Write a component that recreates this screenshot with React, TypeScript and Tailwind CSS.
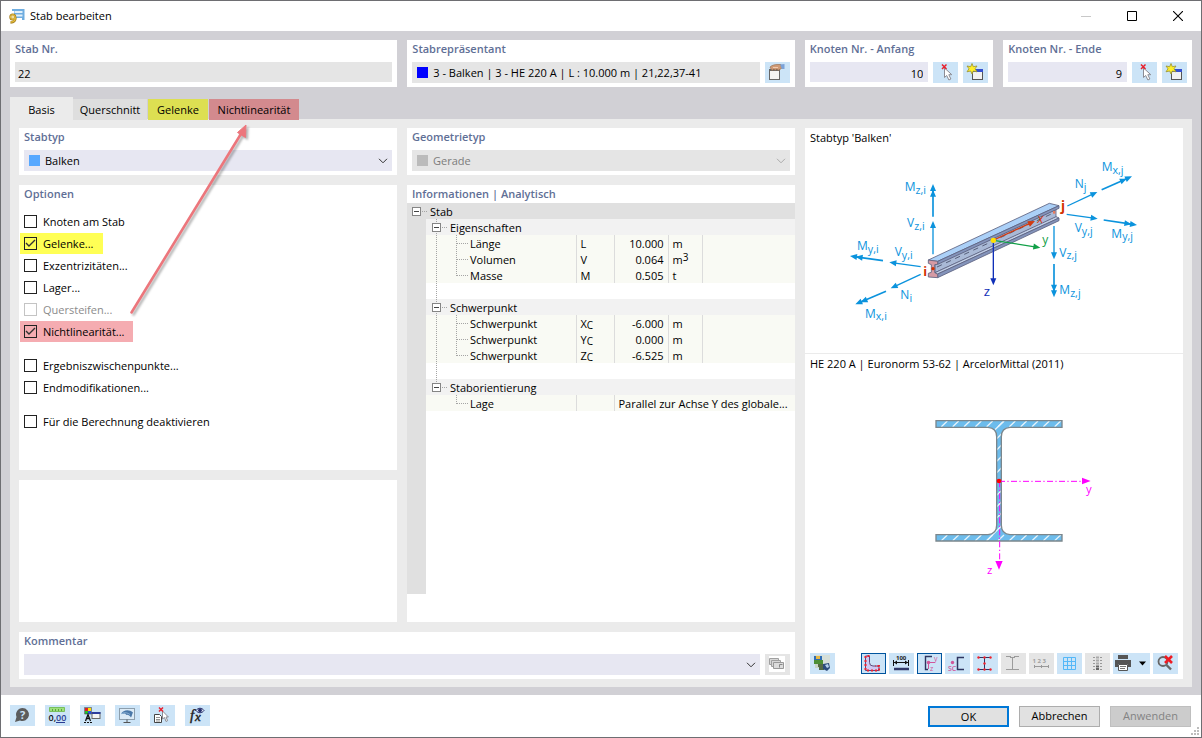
import { useState, type ReactNode } from 'react'

type CheckOption = {
  id: string
  label: string
  checked?: boolean
  disabled?: boolean
  className?: string
}

const optionGroups: CheckOption[][] = [
  [
    { id: 'nodes', label: 'Knoten am Stab' },
    { id: 'hinges', label: 'Gelenke...', checked: true, className: 'bg-[#ffff55]' },
    { id: 'ecc', label: 'Exzentrizitäten...' },
    { id: 'support', label: 'Lager...' },
    { id: 'stiff', label: 'Quersteifen...', disabled: true },
    { id: 'nonlin', label: 'Nichtlinearität...', checked: true, className: 'bg-[#f5acb1]' },
  ],
  [
    { id: 'points', label: 'Ergebniszwischenpunkte...' },
    { id: 'ends', label: 'Endmodifikationen...' },
  ],
  [{ id: 'deactivate', label: 'Für die Berechnung deaktivieren' }],
]

const infoGroups = [
  {
    title: 'Eigenschaften',
    rows: [
      { name: 'Länge', symbol: 'L', value: '10.000', unit: 'm' },
      { name: 'Volumen', symbol: 'V', value: '0.064', unit: 'm', sup: '3' },
      { name: 'Masse', symbol: 'M', value: '0.505', unit: 't' },
    ],
  },
  {
    title: 'Schwerpunkt',
    rows: [
      { name: 'Schwerpunkt', symbol: 'X', sub: 'C', value: '-6.000', unit: 'm' },
      { name: 'Schwerpunkt', symbol: 'Y', sub: 'C', value: '0.000', unit: 'm' },
      { name: 'Schwerpunkt', symbol: 'Z', sub: 'C', value: '-6.525', unit: 'm' },
    ],
  },
]

const tabs = [
  { label: 'Basis', className: 'w-[63px] bg-[#dedede]' },
  { label: 'Querschnitt', className: 'w-[74px] mr-px bg-[#dedede]' },
  { label: 'Gelenke', className: 'w-[60px] mr-px bg-[#dddf52]' },
  { label: 'Nichtlinearität', className: 'w-[90px] bg-[#d38a8e]' },
]

function Card({ title, htmlFor, className = '', children }: { title?: string; htmlFor?: string; className?: string; children?: ReactNode }) {
  return (
    <section className={`flex flex-col bg-white px-[5px] pb-1 ${className}`}>
      {title && (htmlFor
        ? <label htmlFor={htmlFor} className="h-[22px] shrink-0 leading-[18px] font-semibold text-[#5f6f96]">{title}</label>
        : <h2 className="h-[18px] shrink-0 leading-[18px] font-semibold text-[#5f6f96]">{title}</h2>)}
      {children}
    </section>
  )
}

function IconButton({ label, disabled, active, wide, children }: { label: string; disabled?: boolean; active?: boolean; wide?: boolean; children: ReactNode }) {
  return (
    <button
      type="button"
      aria-label={label}
      disabled={disabled}
      className={`h-[21px] shrink-0 ${wide ? 'w-[37px]' : 'w-[25px]'} ${disabled ? 'bg-[#e5e5e5]' : 'bg-[#cce4f7]'} ${active ? 'outline-1 -outline-offset-1 outline-[#00549e]' : ''}`}
    >
      <svg viewBox={wide ? '0 0 37 21' : '0 0 25 21'} className="block h-full w-full" fill="none">{children}</svg>
    </button>
  )
}

function Chevron({ className }: { className: string }) {
  return (
    <svg viewBox="0 0 10 6" className={`pointer-events-none h-[6px] w-[10px] shrink-0 ${className}`} fill="none" stroke="currentColor">
      <path d="M1 .8 5 4.8 9 .8" />
    </svg>
  )
}

function RedCross({ x, y, s = 4 }: { x: number; y: number; s?: number }) {
  return <path d={`M${x} ${y}l${s} ${s}M${x + s} ${y}l${-s} ${s}`} stroke="#e8202c" strokeWidth="1.5" />
}

function PickIcon() {
  return (
    <>
      <path d="M11.500 6v9.500l2.200-2 2.200 4.500 2-1-2.100-4.300h3z" fill="#fff" stroke="#8c8c94" />
      <RedCross x={9} y={2.5} s={4.5} />
    </>
  )
}

function NewIcon() {
  return (
    <>
      <rect x="9.500" y="7.500" width="10" height="10" fill="#f1f1f1" stroke="#555" />
      <path d="M9 7h11v3H9z" fill="#3450d0" />
      <path d="m9 1.500 1.300 3.200 3.700-.7-2 2.800 2 3-3.700-.8L9 12l-1.300-3-3.700.8 2-3-2-2.800 3.700.7z" fill="#ffee2b" stroke="#98922f" strokeWidth=".8" />
    </>
  )
}

function NodeCard({ title, id, value }: { title: string; id: string; value: string }) {
  return (
    <Card title={title} htmlFor={id}>
      <div className="flex gap-[5px]">
        <input id={id} defaultValue={value} className="h-5 min-w-0 flex-1 bg-[#e7e7f2] px-[5px] pt-[2px] text-right" />
        <IconButton label="Knoten auswählen"><PickIcon /></IconButton>
        <IconButton label="Neuer Knoten"><NewIcon /></IconButton>
      </div>
    </Card>
  )
}

function Option({ option }: { option: CheckOption }) {
  return (
    <label className={`-ml-1 mb-px flex h-[21px] w-fit items-center gap-[6px] pr-[9px] pl-1 ${option.className ?? ''} ${option.disabled ? 'text-[#8b8b8b]' : ''}`}>
      <span className="relative block size-[13px]">
        <input
          type="checkbox"
          defaultChecked={option.checked}
          disabled={option.disabled}
          className="peer block size-[13px] appearance-none border border-[#222] disabled:border-[#c4c4c4]"
        />
        <svg viewBox="0 0 13 13" className="pointer-events-none absolute inset-0 hidden size-[13px] peer-checked:block" fill="none" stroke="#333" strokeWidth="1.400">
          <path d="m2 6 3 3 6-6" />
        </svg>
      </span>
      <span className="pt-[2px]">{option.label}</span>
    </label>
  )
}

function Expander({ x }: { x: number }) {
  return (
    <>
      <rect x={x + 0.5} y="4.500" width="8" height="8" fill="#fff" stroke="#858585" />
      <path d={`M${x + 2} 8.5h5`} stroke="#444" />
      <path d={`M${x + 10} 8.5h6`} stroke="#a5a5a5" strokeDasharray="1 1" />
    </>
  )
}

// Tree lines in front of a row: trunk of the parent level plus branch of the own level
function TreeBranch({ trunk = true, last = false }: { trunk?: boolean; last?: boolean }) {
  return (
    <svg viewBox="0 0 44 16" className="h-4 w-11 shrink-0" fill="none" stroke="#a5a5a5" strokeDasharray="1 1">
      {trunk && <path d="M10.500 0v16" />}
      <path d={last ? 'M30.5 0v9' : 'M30.5 0v16'} />
      <path d="M31 8.500h11" />
    </svg>
  )
}

function GroupRow({ title, last }: { title: string; last?: boolean }) {
  return (
    <tr className="h-4">
      <td className="bg-[#e0e0e0] p-0" />
      <th colSpan={5} scope="rowgroup" className="bg-[#f2f2f2] p-0 text-left font-normal">
        <div className="flex h-4">
          <svg viewBox="0 0 24 16" className="h-4 w-6 shrink-0" fill="none">
            <path d={last ? 'M10.5 0v5' : 'M10.5 0v16'} stroke="#a5a5a5" strokeDasharray="1 1" />
            <Expander x={6} />
          </svg>
          {title}
        </div>
      </th>
    </tr>
  )
}

const cell = 'border-l border-[#dcdcdc] bg-[#f9faf4] p-0 px-1'

function InfoTable() {
  return (
    <table className="w-full table-fixed border-collapse leading-[18px]">
      <colgroup>
        <col className="w-[19px]" />
        <col className="w-[150px]" />
        <col className="w-[38px]" />
        <col className="w-[54px]" />
        <col className="w-[34px]" />
        <col />
      </colgroup>
      <tbody>
        <tr className="h-4">
          <th colSpan={6} className="bg-[#e0e0e0] p-0 text-left font-normal">
            <div className="flex h-4">
              <svg viewBox="0 0 23 16" className="h-4 w-[23px] shrink-0" fill="none"><Expander x={5} /></svg>
              Stab
            </div>
          </th>
        </tr>
        {infoGroups.map((group) => [
          <GroupRow key={group.title} title={group.title} />,
          ...group.rows.map((row, i) => (
            <tr key={group.title + i} className="h-4">
              <td className="bg-[#e0e0e0] p-0" />
              <td className="bg-[#f9faf4] p-0">
                <div className="flex h-4"><TreeBranch last={i === group.rows.length - 1} />{row.name}</div>
              </td>
              <td className={cell}>
                <div className="h-4">{row.symbol}{'sub' in row && <span className="relative top-px text-[10px]">{row.sub}</span>}</div>
              </td>
              <td className={`${cell} text-right`}><div className="h-4">{row.value}</div></td>
              <td className={cell}>
                <div className="h-4">{row.unit}{'sup' in row && <span className="relative -top-[3px] text-[10px]">{row.sup}</span>}</div>
              </td>
              <td className={cell} />
            </tr>
          )),
          <tr key={group.title + 'gap'} className="h-4">
            <td className="bg-[#e0e0e0] p-0" />
            <td colSpan={5} className="p-0">
              <svg viewBox="0 0 24 16" className="block h-4 w-6" stroke="#a5a5a5" strokeDasharray="1 1"><path d="M10.500 0v16" /></svg>
            </td>
          </tr>,
        ])}
        <GroupRow title="Staborientierung" last />
        <tr className="h-4">
          <td className="bg-[#e0e0e0] p-0" />
          <td className="bg-[#f9faf4] p-0">
            <div className="flex h-4"><TreeBranch trunk={false} last />Lage</div>
          </td>
          <td className={cell} />
          <td colSpan={3} className={cell}><div className="h-4 whitespace-nowrap">Parallel zur Achse Y des globale...</div></td>
        </tr>
      </tbody>
    </table>
  )
}

function Arrow({ p, color = '#0b93dd', double }: { p: [number, number, number, number]; color?: string; double?: boolean }) {
  const [x1, y1, x2, y2] = p
  const len = Math.hypot(x2 - x1, y2 - y1)
  const ux = (x2 - x1) / len
  const uy = (y2 - y1) / len
  const head = (x: number, y: number) =>
    `M${x} ${y}L${x - ux * 21 - uy * 9} ${y - uy * 21 + ux * 9}L${x - ux * 21 + uy * 9} ${y - uy * 21 - ux * 9}Z`
  return (
    <g>
      <path d={`M${x1} ${y1}L${x2 - ux * 12} ${y2 - uy * 12}`} stroke={color} strokeWidth={double ? 5 : 4} />
      <path d={head(x2, y2) + (double ? head(x2 - ux * 17, y2 - uy * 17) : '')} fill={color} />
    </g>
  )
}

function ForceLabel({ x, y, main, sub }: { x: number; y: number; main: string; sub: string }) {
  return (
    <text x={x} y={y} fill="#0b93dd" fontSize="36">
      {main}<tspan dy="8" fontSize="32">{sub}</tspan>
    </text>
  )
}

function MemberDrawing() {
  return (
    <svg viewBox="15 84 1134 615" className="h-[205px] w-full" fill="none" role="img" aria-label="Stabtyp Balken">
      <Arrow p={[399, 290, 399, 192]} double />
      <Arrow p={[399, 403, 399, 303]} />
      <Arrow p={[249, 422, 150, 408]} double />
      <Arrow p={[362, 440, 268, 427]} />
      <Arrow p={[362, 463, 272, 505]} />
      <Arrow p={[258, 514, 166, 553]} double />
      <Arrow p={[802, 258, 892, 216]} />
      <Arrow p={[905, 209, 996, 169]} double />
      <Arrow p={[800, 283, 893, 296]} />
      <Arrow p={[911, 300, 1011, 315]} double />
      <Arrow p={[762, 318, 762, 418]} />
      <Arrow p={[762, 432, 762, 532]} double />
      <g stroke="#5d6280" strokeWidth="2.500" strokeLinejoin="round">
        <path d="M405 434 768 268v24L405 458z" fill="#a9b9d6" />
        <path d="M405 458 768 290l9 4L413 462z" fill="#c0cee6" />
        <path d="M413 462 777 294v8L413 473z" fill="#8494bb" />
        <path d="M385 420 748 250l29 7L413 424z" fill="#abd0f7" />
        <path d="M413 424 777 257v8L413 433z" fill="#8494bb" />
        <path d="M385 420 413 424V433L404 434V458L413 463V473L385 471V460L394 457V434L385 430Z" fill="#d59aa4" />
      </g>
      <path d="M411 441 756 281" stroke="#454c66" strokeWidth="2.500" strokeDasharray="16 14" />
      <path d="M759 273h7v8h-7z" fill="#e87a5c" />
      <circle cx="399" cy="446" r="5" fill="#d23200" />
      <Arrow p={[581, 360, 705, 303]} color="#d23a10" />
      <Arrow p={[581, 361, 721, 383]} color="#12a048" />
      <Arrow p={[580, 361, 580, 496]} color="#1030b8" />
      <circle cx="580" cy="361" r="8" fill="#ffe000" />
      <ForceLabel x={314} y={214} main="M" sub="z,i" />
      <ForceLabel x={321} y={322} main="V" sub="z,i" />
      <ForceLabel x={171} y={391} main="M" sub="y,i" />
      <ForceLabel x={284} y={409} main="V" sub="y,i" />
      <ForceLabel x={301} y={537} main="N" sub="i" />
      <ForceLabel x={195} y={593} main="M" sub="x,i" />
      <ForceLabel x={905} y={154} main="M" sub="x,j" />
      <ForceLabel x={824} y={204} main="N" sub="j" />
      <ForceLabel x={824} y={336} main="V" sub="y,j" />
      <ForceLabel x={934} y={353} main="M" sub="y,j" />
      <ForceLabel x={778} y={410} main="V" sub="z,j" />
      <ForceLabel x={778} y={522} main="M" sub="z,j" />
      <text x="712" y="309" fontSize="38" fontStyle="italic" fill="#d23a10">x</text>
      <text x="727" y="371" fontSize="36" fill="#12a048">y</text>
      <text x="551" y="528" fontSize="40" fill="#1030b8">z</text>
      <text x="370" y="467" fontSize="38" fontWeight="700" fill="#d23200">i</text>
      <text x="783" y="273" fontSize="40" fontWeight="700" fill="#d23200">j</text>
    </svg>
  )
}

function SectionDrawing() {
  const outline = 'M408 212H786V232H630Q604 234 604 260V526Q604 552 630 554H786V573H408V554H564Q590 552 590 526V260Q590 234 564 232H408Z'
  const hatch = Array.from({ length: 11 }, (_, i) => 424 + i * 34)
  return (
    <svg viewBox="15 72 1134 828" className="min-h-[276px] w-full flex-1" fill="none" role="img" aria-label="Querschnitt HE 220 A">
      <clipPath id="section"><path d={outline} /></clipPath>
      <path d={outline} fill="#6cbcec" />
      <g clipPath="url(#section)" stroke="#e6f4fc" strokeWidth="4">
        {hatch.map((x) => (
          <path key={x} d={`M${x} 230l18-17M${x} 572l18-17`} />
        ))}
        <path d="M584 240l28-27M560 572l44-44" />
        {[262, 296, 330, 364, 432, 466, 500].map((y) => (
          <path key={y} d={`M590 ${y + 4}l14-14`} />
        ))}
      </g>
      <path d={outline} stroke="#7b868c" strokeWidth="4" />
      <path d="M597 394H850" stroke="#ff00ff" strokeWidth="3" strokeDasharray="18 7 4 7" />
      <path d="M599 394V636" stroke="#ff00ff" strokeWidth="3" strokeDasharray="18 7 4 7" />
      <path d="M846 383 872 393 846 403Z M586 633H608L597 659Z" fill="#ff00ff" />
      <circle cx="597" cy="393" r="7" fill="#ff0000" />
      <text x="858" y="430" fontSize="34" fill="#ff00ff">y</text>
      <text x="561" y="671" fontSize="34" fill="#ff00ff">z</text>
    </svg>
  )
}

function PreviewToolbar() {
  return (
    <div className="flex gap-[3px] pb-px">
      <IconButton label="Bild">
        <path d="M4 2h16v9H4z" fill="#d6dfd8" />
        <path d="M4 3h8v6H4z" fill="#2f6db4" />
        <path d="M6 3h4v3H6z" fill="#e9b944" />
        <path d="M4 7h9v4H4z" fill="#4d8f35" />
        <path d="M5 11h8v4H5z" fill="#c9d4c4" />
        <path d="M8 11h5v3H8zM9 14h5v3H9z" fill="#556b45" />
        <path d="m13 11 6-1 1 5-3 3-4-2z" fill="#2c4c7c" />
        <path d="m15 12 3-1 1 3-2 1z" fill="#b7d3ec" />
      </IconButton>
      <div className="flex-1" />
      <IconButton label="Kontur" active>
        <path d="M4.500 3h4v6.500q0 3.500 3.500 3.500h6v4.500H4.500z" fill="#cfc8f2" stroke="#5d4a7c" />
        <path d="M8.500 3h-4v14.500H18V13h-4" stroke="#ee2030" strokeWidth="2" strokeDasharray="2 2" />
      </IconButton>
      <IconButton label="Maße">
        <text x="7" y="6.500" fontSize="6" fontWeight="700" fill="#222">100</text>
        <path d="M4.500 7v6M19.500 7v6M5 9.500h15" stroke="#111" />
        <path d="m5 9.500 3-2v4zM19 9.500l-3-2v4z" fill="#111" />
        <path d="M5 16h15" stroke="#303868" strokeWidth="2.500" />
      </IconButton>
      <IconButton label="Hauptachsen" active>
        <path d="M15 3.500H8.500v13H11" stroke="#2e3560" strokeWidth="1.400" />
        <path d="M11.500 9v7M11 9.500h7" stroke="#d1569a" />
        <circle cx="11.500" cy="9.500" r="1.800" fill="#d1569a" />
        <text x="17" y="8" fontSize="7" fill="#d1569a">y</text>
        <text x="13" y="18" fontSize="7" fill="#d1569a">z</text>
      </IconButton>
      <IconButton label="Schubmittelpunkt">
        <path d="M19 4.500h-6.500v12H19" stroke="#2e3560" strokeWidth="1.500" />
        <circle cx="7.500" cy="9.500" r="1.700" fill="#d1569a" />
        <text x="3" y="18" fontSize="7" fontWeight="600" fill="#d1569a">SC</text>
      </IconButton>
      <IconButton label="Spannungspunkte">
        <path d="M5 4.500h13M5 16.500h13M11.500 4.500v12" stroke="#2e3560" />
        <g fill="#f0222c">
          <circle cx="5.500" cy="4.500" r="1.200" /><circle cx="11.500" cy="4.500" r="1.200" /><circle cx="17.500" cy="4.500" r="1.200" />
          <circle cx="11.500" cy="10.500" r="1.200" />
          <circle cx="5.500" cy="16.500" r="1.200" /><circle cx="11.500" cy="16.500" r="1.200" /><circle cx="17.500" cy="16.500" r="1.200" />
        </g>
      </IconButton>
      <IconButton label="Querschnittsteile" disabled>
        <path d="M5 3.500h5M13 3.500h5M11.500 4v12M5 16.500h13M9 4.500h5" stroke="#9b9b9b" />
      </IconButton>
      <IconButton label="Nummerierung" disabled>
        <text x="3.500" y="10" fontSize="6" fontWeight="700" fill="#a0a0a0">1 2 3</text>
        <path d="M5 13.500h15M5.500 12v3M12.500 12v3M19.500 12v3" stroke="#999" />
      </IconButton>
      <IconButton label="Raster">
        <path d="M6.500 4.500h12v12h-12zM10.500 4.500v12M14.500 4.500v12M6.500 8.500h12M6.500 12.500h12" stroke="#55b8f8" />
      </IconButton>
      <IconButton label="Werte" disabled>
        <path d="M8 4.500h2M8 7.500h2M8 10.500h2M8 13.500h2M8 16.500h2M15 4.500h2M15 7.500h2M15 10.500h2M15 13.500h2M15 16.500h2" stroke="#999" />
        <path d="M11 4.500h3M11 7.500h3M11 10.500h3" stroke="#aaa" strokeWidth="2" />
        <path d="M11 13.500h3M11 16h3" stroke="#666" strokeWidth="2" />
      </IconButton>
      <IconButton label="Drucken" wide>
        <path d="M5 2h10v4H5zM2 7h16v7h-3v-3H5v3H2z" fill="#555" />
        <path d="M5.500 11.500h9v6h-9z" fill="#fff" stroke="#555" />
        <path d="M7 13.500h6M7 15.500h5" stroke="#777" />
        <path d="m26 8.500 3.500 4 3.500-4z" fill="#000" />
      </IconButton>
      <IconButton label="Ansicht zurücksetzen">
        <circle cx="10" cy="8.500" r="4.500" stroke="#666" strokeWidth="1.800" />
        <path d="m13.500 12 4.500 4.500" stroke="#666" strokeWidth="2.400" />
        <path d="m12 3 7 7M19 3l-7 7" stroke="#ee1c24" strokeWidth="2.600" />
      </IconButton>
    </div>
  )
}

function FooterTools() {
  return (
    <div className="flex gap-[10px] pb-px">
      <IconButton label="Hilfe">
        <path d="M12.500 3a6.500 6.500 0 1 1-2.500 12.500L5 17l1.500-5A6.500 6.500 0 0 1 12.500 3z" fill="#5c5c5c" />
        <text x="10" y="13.500" fontSize="11" fontWeight="700" fill="#cce4f7">?</text>
      </IconButton>
      <IconButton label="Einheiten">
        <path d="M4.500 2.500h15v4h-15z" fill="#9ee07c" stroke="#78c05c" />
        <path d="M7.500 4v2M10.500 4v2M13.500 4v2M16.500 4v2" stroke="#5ba340" />
        <text x="3.500" y="15.500" fontSize="9" fontWeight="600" fill="#111">0,<tspan fill="#283c94">00</tspan></text>
        <path d="M11 17.500h9" stroke="#283c94" />
      </IconButton>
      <IconButton label="Farben">
        <path d="M5 3h3v3H5z" fill="#e02020" /><path d="M8 3h3v3H8z" fill="#ffe000" />
        <path d="M5 6h3v3H5z" fill="#20c030" /><path d="M8 6h3v3H8z" fill="#2850e0" />
        <path d="M4.500 2.500h7v6.500h-7z" stroke="#444" strokeWidth=".6" />
        <path d="M5.500 16 8 9.500l2.500 6.500M6.500 13.500h3" stroke="#111" strokeWidth="1.300" />
        <path d="M4 17.500h9" stroke="#111" strokeDasharray="2 1" />
        <rect x="12" y="7.500" width="8" height="6" fill="#f4f4f4" stroke="#666" />
        <path d="M11.500 7h9v2h-9z" fill="#2c3c9c" />
      </IconButton>
      <IconButton label="Anzeige">
        <rect x="4.500" y="3.500" width="15" height="11" stroke="#8c9eac" fill="#dcebf6" />
        <path d="M6 9c2-4 8-5 12-1.500-1 2-1 3-2 5-1.500-2-3-3-4.500-2.500L10 8.500z" fill="#4a78a8" />
        <path d="M6 9c3-2 6-1.500 9 .5" stroke="#a8cbe8" strokeWidth=".7" />
        <path d="M12 14.500v3M8.500 17.500h7" stroke="#555" />
      </IconButton>
      <IconButton label="Auswahl">
        <path d="M4.500 9.500h5l2 2v6h-7z" fill="#fff" stroke="#444" />
        <path d="M6 12.500h4M6 14.500h4M6 16h4" stroke="#777" strokeWidth=".8" />
        <path d="M12.500 6v8l2-1.500 1.500 4 1.600-.8-1.600-3.700h2.400z" fill="#fff" stroke="#8c8c94" />
        <RedCross x={9} y={2.5} />
      </IconButton>
      <IconButton label="Formel">
        <text x="5" y="15" fontSize="15" fontStyle="italic" fill="#222" stroke="#222" strokeWidth=".4" className="font-['Liberation_Serif',serif]">f</text>
        <text x="10" y="16" fontSize="13" fontStyle="italic" fill="#222" stroke="#222" strokeWidth=".4" className="font-['Liberation_Serif',serif]">x</text>
        <path d="M11 5.500c2-3 6-3 8 0-2 3-6 3-8 0z" fill="#dfe4f4" stroke="#26306c" />
        <circle cx="15" cy="5.300" r="1.900" fill="#26306c" />
      </IconButton>
    </div>
  )
}

export default function App() {
  const [activeTab, setActiveTab] = useState('Basis')

  return (
    <div className="relative flex min-h-screen flex-col border border-[#6e6e72] bg-white font-['Open_Sans',sans-serif] text-[11px] text-black">
      {/* Title bar */}
      <header className="flex h-[30px] shrink-0 items-center">
        <svg viewBox="0 0 16 16" className="ml-2 size-4" fill="none">
          <path d="M3 1h12.500v11H13v-2H5V3H3z" fill="#6fade0" />
          <path d="M5.500 3h8v2h-8zM5.500 6.500h8v2h-8z" fill="#e0f0fb" />
          <circle cx="3.800" cy="9" r="2.600" fill="#f0dca0" stroke="#a37c1c" strokeWidth="1.800" />
          <path d="M6.500 9.500c0 3-1.500 5-5 5" stroke="#a37c1c" strokeWidth="2.400" />
          <path d="M6.300 9.500c0 3-1.500 4.500-4.500 4.700" stroke="#e8c13c" strokeWidth="1.200" />
          <circle cx="3.800" cy="9" r="2.400" stroke="#e8c13c" />
        </svg>
        <h1 className="ml-[5px] flex-1 text-[11px]">Stab bearbeiten</h1>
        <button type="button" aria-label="Minimieren" disabled className="flex h-full w-[46px] items-center justify-center">
          <svg viewBox="0 0 10 10" className="size-[10px]" stroke="#c8c8c8"><path d="M0 5.500h10" /></svg>
        </button>
        <button type="button" aria-label="Maximieren" className="flex h-full w-[46px] items-center justify-center">
          <svg viewBox="0 0 10 10" className="size-[10px]" fill="none" stroke="#000"><path d="M.5.5h9v9h-9z" /></svg>
        </button>
        <button type="button" aria-label="Schließen" className="flex h-full w-[46px] items-center justify-center">
          <svg viewBox="0 0 10 10" className="size-[10px]" stroke="#000" strokeWidth="1.100"><path d="m0 0 10 10M10 0 0 10" /></svg>
        </button>
      </header>

      <main className="flex flex-1 flex-col bg-[#d1d0d5] px-[9px] pt-[9px] pb-2">
        <div className="grid grid-cols-3 gap-[10px]">
          <Card title="Stab Nr." htmlFor="member">
            <input id="member" defaultValue="22" readOnly className="h-5 w-full bg-[#e5e5e5] px-[3px] pt-[2px]" />
          </Card>
          <Card title="Stabrepräsentant" htmlFor="representative">
            <div className="flex gap-[5px]">
              <div className="flex h-[21px] flex-1 items-center gap-[5px] bg-[#e5e5e5] px-[5px]">
                <span className="size-[11px] bg-[#0000ff]" />
                <input id="representative" readOnly defaultValue="3 - Balken | 3 - HE 220 A | L : 10.000 m | 21,22,37-41" className="min-w-0 flex-1 pt-px" />
              </div>
              <IconButton label="Repräsentant bearbeiten">
                <rect x="4.500" y="7.500" width="10" height="10" fill="#f3f3f3" stroke="#666" />
                <path d="M4 7h11v2H4z" fill="#666" />
                <path d="M5 5c2-2 5-2.500 8-2.500h3l.5 4L13 8.500 12 7l-2 1.500L9 7 7 8.500 6 7z" fill="#cf9a76" stroke="#8f6448" strokeWidth=".6" />
                <path d="M8 5.500h5" stroke="#f0cbb0" />
                <path d="m15 2.500 4.500-.5v5H17z" fill="#7ba2d8" />
              </IconButton>
            </div>
          </Card>
          <div className="grid grid-cols-2 gap-[10px]">
            <NodeCard title="Knoten Nr. - Anfang" id="start" value="10" />
            <NodeCard title="Knoten Nr. - Ende" id="end" value="9" />
          </div>
        </div>

        {/* Tabs */}
        <div role="tablist" className="mt-[10px] flex h-[22px] items-end">
          {tabs.map((tab) => (
            <button
              key={tab.label}
              type="button"
              role="tab"
              aria-selected={activeTab === tab.label}
              onClick={() => setActiveTab(tab.label)}
              className={`z-1 -mb-px whitespace-nowrap ${tab.className} ${activeTab === tab.label ? 'h-[23px] bg-[#ebebeb]! pt-1' : 'h-[21px] pt-[2px]'}`}
            >
              {tab.label}
            </button>
          ))}
        </div>

        <div role="tabpanel" className="relative grid flex-1 grid-cols-[378fr_388fr_378fr] grid-rows-[auto_1fr_auto] gap-[10px] bg-[#ebebeb] px-[9px] pt-[9px] pb-2">
          <Card title="Stabtyp" htmlFor="type">
            <div className="flex h-[21px] items-center bg-[#e7e7f2] pr-1 pl-[5px]">
              <span className="mr-[5px] size-[11px] bg-[#57a8ff]" />
              <select id="type" className="min-w-0 flex-1 appearance-none pt-[2px]"><option>Balken</option></select>
              <Chevron className="text-[#333]" />
            </div>
          </Card>
          <Card title="Geometrietyp" htmlFor="geometry">
            <div className="flex h-[21px] items-center bg-[#e5e5e5] pr-1 pl-[5px] text-[#7c7c7c]">
              <span className="mr-[5px] size-[11px] bg-[#bbb]" />
              <select id="geometry" disabled className="min-w-0 flex-1 appearance-none pt-[2px] opacity-100"><option>Gerade</option></select>
              <Chevron className="text-[#aaa]" />
            </div>
          </Card>

          {/* Preview column */}
          <section className="row-span-3 flex flex-col bg-white">
            <h2 className="h-5 px-[5px] leading-5">Stabtyp 'Balken'</h2>
            <MemberDrawing />
            <h2 className="h-[21px] border-t border-[#ebebeb] px-[5px] leading-5">HE 220 A | Euronorm 53-62 | ArcelorMittal (2011)</h2>
            <SectionDrawing />
            <div className="mt-[3px] px-[5px] pb-1"><PreviewToolbar /></div>
          </section>

          <div className="flex flex-col gap-[10px]">
            <Card title="Optionen" className="h-[285px]">
              <div className="mt-2 flex flex-col gap-3">
                {optionGroups.map((group, i) => (
                  <div key={i}>{group.map((option) => <Option key={option.id} option={option} />)}</div>
                ))}
              </div>
            </Card>
            <Card className="min-h-[142px] flex-1" />
          </div>

          <section className="flex flex-col bg-white">
            <h2 className="h-[18px] px-[5px] leading-[18px] font-semibold text-[#5f6f96]">Informationen | Analytisch</h2>
            <InfoTable />
            <div className="mb-7 w-[19px] flex-1 bg-[#e0e0e0]" />
          </section>

          <Card title="Kommentar" htmlFor="comment" className="col-span-2">
            <div className="flex gap-[5px]">
              <div className="flex h-[21px] flex-1 items-center bg-[#e7e7f2] pr-1">
                <select id="comment" className="min-w-0 flex-1 appearance-none"><option></option></select>
                <Chevron className="text-[#333]" />
              </div>
              <IconButton label="Kommentare" disabled>
                <path d="M4 2h16v16H4z" fill="#fff" />
                <path d="M4.500 4.500h9v6h-9z" fill="#d8d8d8" stroke="#a0a0a0" />
                <path d="M6.500 6.500h9v6h-9z" fill="#d8d8d8" stroke="#a0a0a0" />
                <path d="M8.500 8.500h10v6h-10z" fill="#dcdcdc" stroke="#999" />
                <path d="M14.500 13.500v-3h3" stroke="#888" />
              </IconButton>
            </div>
          </Card>

          {/* Arrow from the option to its tab */}
          <svg viewBox="0 0 140 210" className="pointer-events-none absolute top-0 left-[110px] h-[210px] w-[140px] overflow-visible drop-shadow-[2px_2px_1px_rgba(0,0,0,0.3)]" fill="none">
            <path d="M11.500 193.500 121.500 14" stroke="#ec767c" strokeWidth="2.600" strokeLinecap="round" />
            <path d="m126 6-.5 12.500-8-5z" fill="#ec767c" stroke="#ec767c" />
          </svg>
        </div>
      </main>

      <footer className="flex h-[42px] shrink-0 items-center justify-between pr-[10px] pl-[9px]">
        <FooterTools />
        <div className="flex gap-[10px]">
          <button type="button" className="h-[21px] w-[81px] border-2 border-[#0078d7] bg-[#e1e1e1] leading-[18px]">OK</button>
          <button type="button" className="h-[21px] w-[81px] border border-[#adadad] bg-[#e1e1e1] pt-px">Abbrechen</button>
          <button type="button" disabled className="h-[21px] w-[81px] border border-[#bfbfbf] bg-[#ccc] pt-px text-[#838383]">Anwenden</button>
        </div>
      </footer>
      <svg viewBox="0 0 8 8" className="absolute right-[2px] bottom-[2px] size-2" fill="#bdbdbd">
        <path d="M6 0h2v2H6zM3 3h2v2H3zM6 3h2v2H6zM0 6h2v2H0zM3 6h2v2H3zM6 6h2v2H6z" />
      </svg>
    </div>
  )
}
